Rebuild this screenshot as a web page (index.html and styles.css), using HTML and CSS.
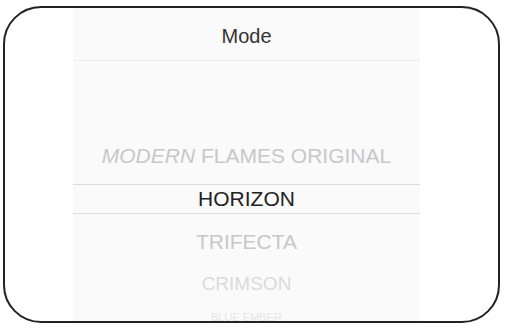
FILE: index.html
```html
<!DOCTYPE html>
<html>
<head>
	<title>Mode</title>
	<link rel="stylesheet" href="styles.css">
</head>
<body>
	<div class="frame">
		<div class="panel">
			<div class="title">Mode</div>
			<ul class="picker">
				<li class="item faint1"><i>MODERN</i> FLAMES ORIGINAL</li>
				<li class="item active">HORIZON</li>
				<li class="item faint1">TRIFECTA</li>
				<li class="item faint2">CRIMSON</li>
				<li class="item faint3">BLUE EMBER</li>
			</ul>
		</div>
	</div>
</body>
</html>
```

FILE: styles.css
```css
*{
	margin: 0;
	padding: 0;
}
body{
	background: #fff;
	font-family: "Liberation Sans", Arial, sans-serif;
}
ul,li{
	list-style: none;
	text-align: center;
}
.frame{
	margin: 6px 8px 0 3px;
	height: 317px;
	box-sizing: border-box;
	border: 2px solid #222;
	border-radius: 38px;
	overflow: hidden;
}
.panel{
	margin-left: 68px;
	width: 347px;
	height: 100%;
	background: #fafafa;
}
.title{
	height: 53px;
	box-sizing: border-box;
	padding-top: 4px;
	border-bottom: 1px solid #efefef;
	display: flex;
	align-items: center;
	justify-content: center;
	font-size: 20px;
	color: #333;
}
.picker{
	padding-top: 74px;
}
.item{
	height: 42px;
	line-height: 42px;
	font-size: 20px;
	color: #c4c4c4;
	white-space: nowrap;
}
.item i{
	font-style: italic;
}
.active{
	height: 30px;
	line-height: 28px;
	box-sizing: border-box;
	margin: 7px 0;
	border-top: 1px solid #dcdcdc;
	border-bottom: 1px solid #dcdcdc;
	font-size: 21px;
	color: #222;
}
.faint1{
	font-size: 21px;
	color: #c8c8c8;
}
.faint2{
	font-size: 19px;
	color: #dadada;
}
.faint3{
	height: 24px;
	line-height: 24px;
	font-size: 11px;
	color: #e6e6e6;
}
```
